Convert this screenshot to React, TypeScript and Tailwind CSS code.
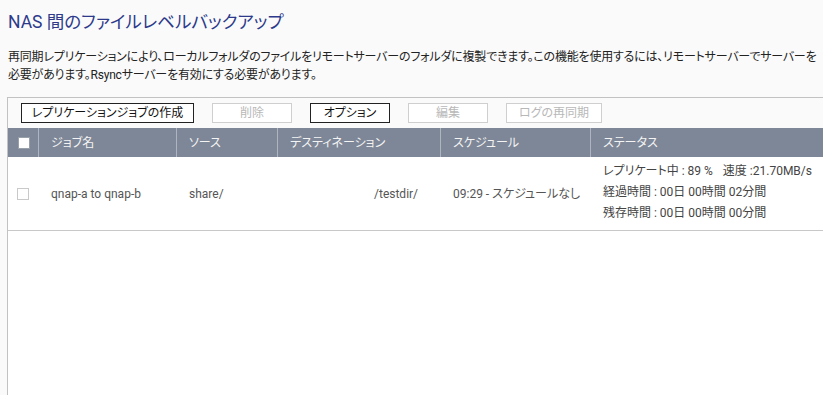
import { ReactNode } from "react";

const font = "font-['Roboto','Noto_Sans_CJK_JP',sans-serif] [font-feature-settings:'palt']";

function ToolButton({ children, disabled, width }: { children: ReactNode; disabled?: boolean; width: string }) {
  return (
    <button
      type="button"
      disabled={disabled}
      className={`h-[20px] ${width} flex items-center justify-center bg-white border text-[12px] leading-none ${
        disabled ? "border-[#cfcfcf] text-[#b8b8b8]" : "border-[#222] text-[#111]"
      }`}
    >
      {children}
    </button>
  );
}

export default function App() {
  return (
    <div className={`w-[823px] h-[395px] overflow-hidden bg-[#fafafa] flex flex-col ${font}`}>
      {/* Title */}
      <h1 className="pt-[11px] pl-[8px] h-[33px] text-[17.5px] leading-[22px] text-[#2d3a8c] whitespace-nowrap">
        NAS 間のファイルレベルバックアップ
      </h1>

      {/* Description */}
      <div className="mt-[15px] pl-[8px] text-[12px] leading-[18px] text-[#222] whitespace-nowrap tracking-[-0.2px]">
        <p>
          再同期レプリケーションにより、ローカルフォルダのファイルをリモートサーバーのフォルダに複製できます。この機能を使用するには、リモートサーバーでサーバーを
        </p>
        <p>必要があります。Rsyncサーバーを有効にする必要があります。</p>
      </div>

      {/* Panel */}
      <div className="mt-[13px] ml-[7px] flex-1 flex flex-col border-l border-t border-[#c2c2c2] bg-white min-w-[900px]">
        {/* Toolbar */}
        <div className="h-[30px] flex items-center gap-[18px] pl-[13px] bg-[#fafafa]">
          <ToolButton width="w-[173px]">レプリケーションジョブの作成</ToolButton>
          <ToolButton width="w-[80px]" disabled>削除</ToolButton>
          <ToolButton width="w-[80px]">オプション</ToolButton>
          <ToolButton width="w-[80px]" disabled>編集</ToolButton>
          <ToolButton width="w-[96px]" disabled>ログの再同期</ToolButton>
        </div>

        {/* Header */}
        <div className="h-[29px] flex bg-[#7e8797] text-[12px] text-[#f4f4f4]">
          <div className="w-[31px] flex items-center pl-[10px] border-r border-[#aeb4c0]">
            <span className="w-[12px] h-[12px] bg-white border border-[#9aa0aa]" />
          </div>
          <div className="w-[138px] flex items-center pl-[12px] border-r border-[#aeb4c0]">ジョブ名</div>
          <div className="w-[101px] flex items-center pl-[12px] border-r border-[#aeb4c0]">ソース</div>
          <div className="w-[163px] flex items-center pl-[12px] border-r border-[#aeb4c0]">デスティネーション</div>
          <div className="w-[150px] flex items-center pl-[12px] border-r border-[#aeb4c0]">スケジュール</div>
          <div className="flex-1 flex items-center pl-[12px]">ステータス</div>
        </div>

        {/* Row */}
        <div className="h-[74px] flex border-b border-[#c8c8c8] text-[12px] text-[#555]">
          <div className="w-[31px] flex items-center pl-[9px]">
            <span className="w-[12px] h-[12px] bg-white border border-[#c9c9c9]" />
          </div>
          <div className="w-[138px] flex items-center pl-[12px]">qnap-a to qnap-b</div>
          <div className="w-[101px] flex items-center pl-[12px]">share/</div>
          <div className="w-[163px] flex items-center pl-[96px]">/testdir/</div>
          <div className="w-[150px] flex items-center pl-[12px]">09:29 - スケジュールなし</div>
          <div className="flex-1 flex flex-col pt-[4px] pl-[12px] leading-[21px] text-[#444] whitespace-nowrap">
            <span>
              レプリケート中 : 89 %<span className="ml-[10px]">速度 :21.70MB/s</span>
            </span>
            <span>経過時間 : 00日 00時間 02分間</span>
            <span>残存時間 : 00日 00時間 00分間</span>
          </div>
        </div>
      </div>
    </div>
  );
}
